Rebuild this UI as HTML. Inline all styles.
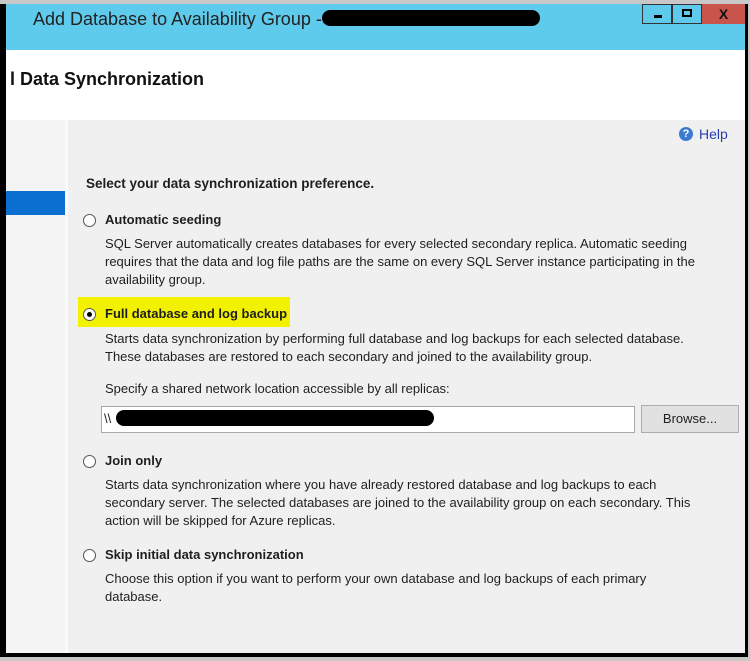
<!DOCTYPE html>
<html><head><style>
body{margin:0;width:750px;height:661px;background:#c8c8c8;position:relative;overflow:hidden;font-family:"Liberation Sans",sans-serif;color:#1e1e1e}
.a{position:absolute;white-space:nowrap}
.t{font-size:13px;line-height:18px}
.b{font-weight:bold;font-size:13px;letter-spacing:0px}
.r{position:absolute;width:11px;height:11px;border:1px solid #555;border-radius:50%;background:#fff}
</style></head><body>
<div class="a" style="left:0;top:4px;width:748px;height:653px;background:#000"></div>
<div class="a" style="left:6px;top:4px;width:739px;height:46px;background:#5ecbec"></div>
<div class="a" style="left:33px;top:6px;font-size:18px;line-height:26px;color:#222">Add Database to Availability Group - </div>
<div class="a" style="left:322px;top:10px;width:218px;height:16px;background:#000;border-radius:8px"></div>
<div class="a" style="left:642px;top:4px;width:30px;height:20px;border:1px solid #333;box-sizing:border-box;background:#5ecbec"><div class="a" style="left:11px;top:10px;width:8px;height:3px;background:#000"></div></div>
<div class="a" style="left:672px;top:4px;width:30px;height:20px;border:1px solid #333;box-sizing:border-box;background:#5ecbec"><div class="a" style="left:9px;top:4px;width:10px;height:8px;border:2px solid #000;box-sizing:border-box"></div></div>
<div class="a" style="left:702px;top:4px;width:43px;height:20px;background:#c9544b;font-weight:bold;font-size:14px;text-align:center;line-height:20px;color:#111">X</div>
<div class="a" style="left:6px;top:50px;width:739px;height:70px;background:#fff"></div>
<div class="a" style="left:10px;top:68px;font-size:18px;font-weight:bold;line-height:22px;color:#111">l Data Synchronization</div>
<div class="a" style="left:6px;top:120px;width:59px;height:533px;background:#f4f4f4"></div>
<div class="a" style="left:65px;top:120px;width:3px;height:533px;background:#fafafa"></div>
<div class="a" style="left:68px;top:120px;width:677px;height:533px;background:#f0f0f0"></div>
<div class="a" style="left:6px;top:191px;width:59px;height:24px;background:#0a6fd1"></div>
<div class="a" style="left:679px;top:127px;width:14px;height:14px;border-radius:50%;background:#3d7bd0;color:#fff;font-size:11px;font-weight:bold;text-align:center;line-height:14px">?</div>
<div class="a t" style="left:699px;top:125px;color:#2a3cb5;font-size:14px">Help</div>
<div class="a b" style="left:86px;top:176px;font-size:13.5px">Select your data synchronization preference.</div>
<div class="r" style="left:83px;top:214px"></div>
<div class="a b" style="left:105px;top:212px">Automatic seeding</div>
<div class="a t" style="left:105px;top:235px">SQL Server automatically creates databases for every selected secondary replica. Automatic seeding<br>requires that the data and log file paths are the same on every SQL Server instance participating in the<br>availability group.</div>
<div class="a" style="left:78px;top:297px;width:212px;height:30px;background:#f2f200"></div>
<div class="r" style="left:83px;top:308px"><div class="a" style="left:3px;top:3px;width:5px;height:5px;border-radius:50%;background:#000"></div></div>
<div class="a b" style="left:105px;top:306px">Full database and log backup</div>
<div class="a t" style="left:105px;top:330px">Starts data synchronization by performing full database and log backups for each selected database.<br>These databases are restored to each secondary and joined to the availability group.</div>
<div class="a t" style="left:105px;top:380px">Specify a shared network location accessible by all replicas:</div>
<div class="a" style="left:101px;top:406px;width:534px;height:27px;background:#fff;border:1px solid #a8a8a8;box-sizing:border-box"></div>
<div class="a t" style="left:104px;top:410px">\\</div>
<div class="a" style="left:116px;top:410px;width:318px;height:16px;background:#000;border-radius:8px"></div>
<div class="a" style="left:641px;top:405px;width:98px;height:28px;background:#e1e1e1;border:1px solid #adadad;box-sizing:border-box;font-size:13px;text-align:center;line-height:26px">Browse...</div>
<div class="r" style="left:83px;top:455px"></div>
<div class="a b" style="left:105px;top:453px">Join only</div>
<div class="a t" style="left:105px;top:476px">Starts data synchronization where you have already restored database and log backups to each<br>secondary server. The selected databases are joined to the availability group on each secondary. This<br>action will be skipped for Azure replicas.</div>
<div class="r" style="left:83px;top:549px"></div>
<div class="a b" style="left:105px;top:547px">Skip initial data synchronization</div>
<div class="a t" style="left:105px;top:570px">Choose this option if you want to perform your own database and log backups of each primary<br>database.</div>
</body></html>
